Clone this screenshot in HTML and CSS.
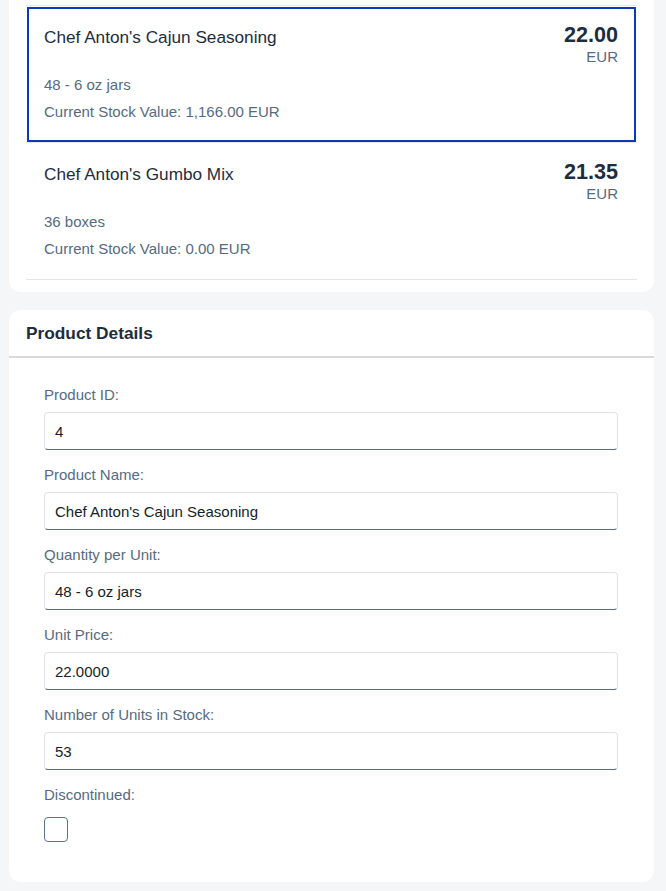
FILE: index.html
```html
<!DOCTYPE html>
<html lang="en">
<head>
<meta charset="utf-8">
<title>Products</title>
<link rel="stylesheet" href="styles.css">
</head>
<body>
<div class="card list-card">
  <ul class="list">
    <li class="item selected">
      <div class="item-top">
        <div class="item-title">Chef Anton's Cajun Seasoning</div>
        <div class="item-price">
          <div class="price">22.00</div>
          <div class="unit">EUR</div>
        </div>
      </div>
      <div class="item-attr">48 - 6 oz jars</div>
      <div class="item-attr second">Current Stock Value: 1,166.00 EUR</div>
    </li>
    <li class="item">
      <div class="item-top">
        <div class="item-title">Chef Anton's Gumbo Mix</div>
        <div class="item-price">
          <div class="price">21.35</div>
          <div class="unit">EUR</div>
        </div>
      </div>
      <div class="item-attr">36 boxes</div>
      <div class="item-attr second">Current Stock Value: 0.00 EUR</div>
    </li>
  </ul>
</div>

<div class="card detail-card">
  <div class="detail-header">Product Details</div>
  <form class="form">
    <div class="field">
      <label class="label" for="pid">Product ID:</label>
      <input class="input" id="pid" type="text" value="4">
    </div>
    <div class="field">
      <label class="label" for="pname">Product Name:</label>
      <input class="input" id="pname" type="text" value="Chef Anton's Cajun Seasoning">
    </div>
    <div class="field">
      <label class="label" for="pqty">Quantity per Unit:</label>
      <input class="input" id="pqty" type="text" value="48 - 6 oz jars">
    </div>
    <div class="field">
      <label class="label" for="pprice">Unit Price:</label>
      <input class="input" id="pprice" type="text" value="22.0000">
    </div>
    <div class="field">
      <label class="label" for="pstock">Number of Units in Stock:</label>
      <input class="input" id="pstock" type="text" value="53">
    </div>
    <div class="field check-field">
      <label class="label" for="pdisc">Discontinued:</label>
      <input class="checkbox" id="pdisc" type="checkbox">
    </div>
  </form>
</div>
</body>
</html>
```

FILE: styles.css
```css
* {
  box-sizing: border-box;
}

html, body {
  margin: 0;
  padding: 0;
}

body {
  background: #f5f6f7;
  font-family: "Liberation Sans", Arial, sans-serif;
  color: #1d2d3e;
  width: 666px;
  height: 891px;
  overflow: hidden;
}

.card {
  background: #ffffff;
  margin: 0 12px 0 9px;
}

.list-card {
  padding: 5px 17px 12px 17px;
  border-radius: 0 0 12px 12px;
}

.list {
  list-style: none;
  margin: 0;
  padding: 0;
  border-top: 1px solid #e5e5e5;
}

.item {
  height: 137px;
  padding: 16px 19px 0 18px;
  border-bottom: 1px solid #e5e5e5;
}

.item.selected {
  outline: 2px solid #0a3ab5;
  outline-offset: -3px;
}

.item-top {
  display: flex;
  justify-content: space-between;
  align-items: flex-start;
  height: 44px;
}

.item-title {
  font-size: 17.2px;
  line-height: 30px;
  color: #1d2d3e;
}

.item-price {
  display: flex;
  flex-direction: column;
  align-items: flex-end;
}

.price {
  font-size: 21.6px;
  font-weight: bold;
  line-height: 26px;
  color: #1d2d3e;
}

.unit {
  font-size: 15px;
  line-height: 18px;
  color: #556b82;
}

.item-attr {
  margin-top: 10px;
  font-size: 15px;
  line-height: 18px;
  color: #556b82;
}

.item-attr.second {
  margin-top: 9px;
}

.detail-card {
  margin-top: 18px;
  border-radius: 12px;
  padding-bottom: 40px;
}

.detail-header {
  height: 48px;
  padding-left: 17px;
  font-size: 17.3px;
  font-weight: bold;
  line-height: 46px;
  color: #1d2d3e;
  border-bottom: 2px solid #d5dadd;
}

.form {
  display: flex;
  flex-direction: column;
  gap: 16px;
  padding: 28px 36px 0 35px;
}

.field {
  display: flex;
  flex-direction: column;
  gap: 8px;
}

.check-field {
  gap: 13px;
}

.label {
  font-size: 15px;
  line-height: 18px;
  color: #556b82;
}

.input {
  width: 100%;
  height: 38px;
  margin: 0;
  padding: 0 10px;
  font-family: "Liberation Sans", Arial, sans-serif;
  font-size: 15px;
  color: #131e29;
  background: #ffffff;
  border: 1px solid #dfe3e7;
  border-bottom-color: #556b82;
  border-radius: 4px;
  outline: none;
}

.checkbox {
  appearance: none;
  -webkit-appearance: none;
  width: 24px;
  height: 25px;
  margin: 0;
  border: 1px solid #5b738b;
  border-radius: 4px;
  background: #ffffff;
}
```
